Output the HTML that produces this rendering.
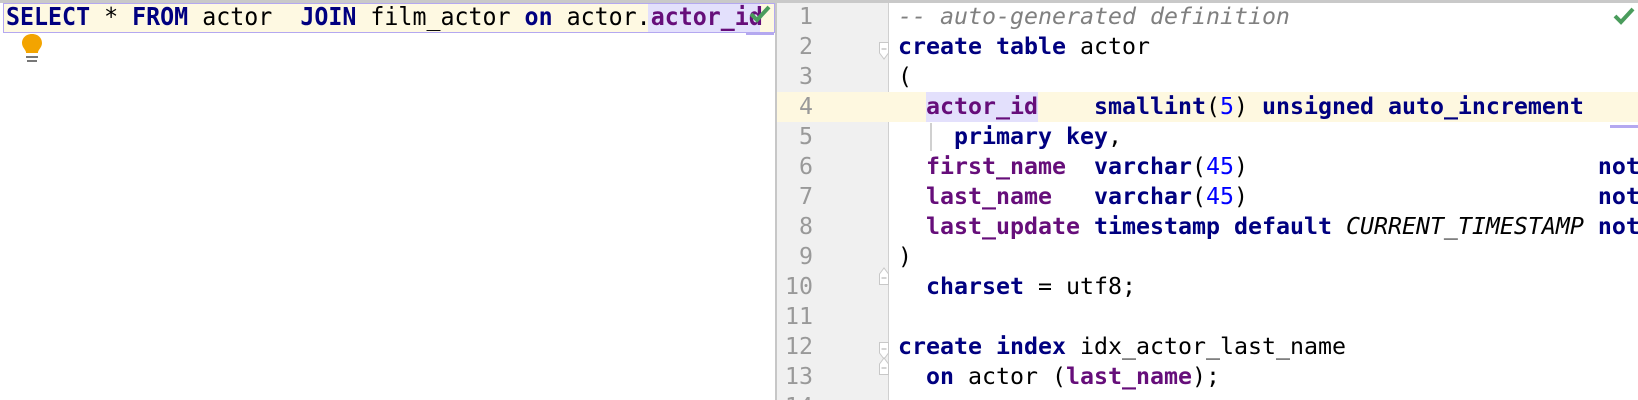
<!DOCTYPE html>
<html><head><meta charset="utf-8"><style>
html,body{margin:0;padding:0;width:1638px;height:400px;overflow:hidden;background:#fff;position:relative}
.top{position:absolute;left:0;top:0;width:1638px;height:3px;background:#c9c9c9}
.lbox{position:absolute;left:3px;top:3px;width:770px;height:28px;border:1px solid #b4a8f0;background:#fef9e2}
.ltext{position:absolute;left:6px;top:2px;font:bold 24.5px/30px "DejaVu Sans Mono",monospace;white-space:pre;transform-origin:0 0;transform:scaleX(0.95);color:#000;letter-spacing:0}
.k{color:#000080;font-weight:bold}
.n{font-weight:normal;color:#000}
.p{color:#660e7a;font-weight:bold}
.gut{position:absolute;left:775px;top:3px;width:111px;height:397px;background:#f0f0f0;border-left:2px solid #c7c7c7;border-right:1px solid #d0d0d0}
.curline{position:absolute;left:777px;top:92px;width:861px;height:30px;background:#fef8e0}
.nums{position:absolute;left:777px;top:2px;width:36px;height:398px;overflow:hidden;font:23.25px/30px "DejaVu Sans Mono",monospace;color:#999;text-align:right;white-space:pre}
.code{position:absolute;left:898px;top:2px;height:398px;overflow:hidden;font:23.25px/30px "DejaVu Sans Mono",monospace;white-space:pre;color:#000}
.code .k,.code .p{font-weight:bold}
.c{color:#808080;font-style:italic}
.b{color:#0000ff}
.i{font-style:italic}
.fold{position:absolute;left:879px}
</style></head><body>
<div class="top"></div>
<div class="lbox"></div>
<div style="position:absolute;left:648px;top:4px;width:112px;height:28px;background:#e3e0fc"></div>
<div class="ltext"><span class="k">SELECT</span><span class="n"> * </span><span class="k">FROM</span><span class="n"> actor  </span><span class="k">JOIN</span><span class="n"> film_actor </span><span class="k">on</span><span class="n"> actor.</span><span class="p">actor_id</span></div>
<svg style="position:absolute;left:748px;top:4px" width="24" height="20" viewBox="0 0 24 20"><path d="M3 10 L9 16 L21 3" stroke="#4a9c5c" stroke-width="4" fill="none"/></svg>
<div style="position:absolute;left:746px;top:32px;width:28px;height:3px;background:#b4a8f0"></div>
<svg style="position:absolute;left:21px;top:33px" width="22" height="30" viewBox="0 0 22 30"><path d="M11 1 C4 1 1 6 1 10 C1 14 4 16 5 19 L5 20 L17 20 L17 19 C18 16 21 14 21 10 C21 6 18 1 11 1Z" fill="#f3a400"/><rect x="5" y="23" width="12" height="2" fill="#777"/><rect x="6" y="27" width="10" height="2" fill="#777"/></svg>

<div class="gut"></div>
<div class="curline"></div>
<div class="nums">1
2
3
4
5
6
7
8
9
10
11
12
13
14</div>
<svg class="fold" style="top:42px" width="10" height="18" viewBox="0 0 10 18"><path d="M0.5 0.5H9.5V11L5 17L0.5 11Z" fill="#fff" stroke="#c8c8c8"/><path d="M2.5 7H7.5" stroke="#aaa"/></svg>
<svg class="fold" style="top:267px" width="10" height="18" viewBox="0 0 10 18"><path d="M0.5 17.5H9.5V7L5 1L0.5 7Z" fill="#fff" stroke="#c8c8c8"/><path d="M2.5 11H7.5" stroke="#aaa"/></svg>
<svg class="fold" style="top:342px" width="10" height="18" viewBox="0 0 10 18"><path d="M0.5 0.5H9.5V11L5 17L0.5 11Z" fill="#fff" stroke="#c8c8c8"/><path d="M2.5 7H7.5" stroke="#aaa"/></svg>
<svg class="fold" style="top:357px" width="10" height="18" viewBox="0 0 10 18"><path d="M0.5 17.5H9.5V7L5 1L0.5 7Z" fill="#fff" stroke="#c8c8c8"/><path d="M2.5 11H7.5" stroke="#aaa"/></svg>
<div style="position:absolute;left:930px;top:123px;width:2px;height:28px;background:#d0d0d0"></div>
<div style="position:absolute;left:926px;top:92px;width:112px;height:30px;background:#e3e0fc"></div>
<div class="code"><span class="c">-- auto-generated definition</span>
<span class="k">create table</span> actor
(
  <span class="p">actor_id</span>    <span class="k">smallint</span>(<span class="b">5</span>) <span class="k">unsigned auto_increment</span>
    <span class="k">primary key</span>,
  <span class="p">first_name</span>  <span class="k">varchar</span>(<span class="b">45</span>)                         <span class="k">not</span>
  <span class="p">last_name</span>   <span class="k">varchar</span>(<span class="b">45</span>)                         <span class="k">not</span>
  <span class="p">last_update</span> <span class="k">timestamp default</span> <span class="i">CURRENT_TIMESTAMP</span> <span class="k">not</span>
)
  <span class="k">charset</span> = utf8;

<span class="k">create index</span> idx_actor_last_name
  <span class="k">on</span> actor (<span class="p">last_name</span>);</div>
<svg style="position:absolute;left:1612px;top:6px" width="24" height="20" viewBox="0 0 24 20"><path d="M3 10 L9 16 L21 3" stroke="#4a9c5c" stroke-width="4" fill="none"/></svg>
<div style="position:absolute;left:1610px;top:125px;width:28px;height:3px;background:#b4a8f0"></div>
</body></html>
